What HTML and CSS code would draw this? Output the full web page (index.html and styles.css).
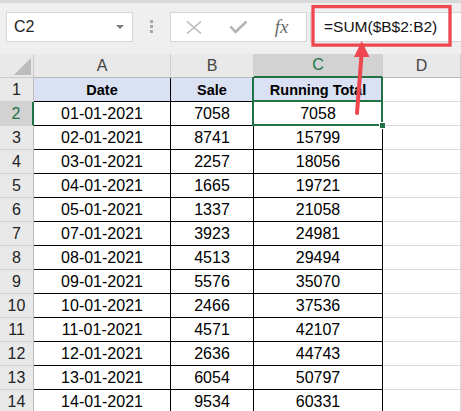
FILE: index.html
```html
<!DOCTYPE html>
<html lang="en">
<head>
  <meta charset="UTF-8" />
  <meta name="viewport" content="width=device-width, initial-scale=1.0"/>
  <title>Running Total</title>
  <link rel="stylesheet" href="styles.css">
</head>
<body>
  <div class="sheet">
    <div class="toolbar">
      <div class="namebox"><span>C2</span><span class="caret"></span></div>
      <div class="grip"><i></i><i></i><i></i></div>
      <div class="fbtns">
        <svg width="16" height="13" viewBox="0 0 16 13"><path d="M1 0.5 L15 12.5 M15 0.5 L1 12.5" stroke="#bdbdbd" stroke-width="1.6" fill="none"/></svg>
        <svg width="19" height="14" viewBox="0 0 19 14"><path d="M1.5 6.5 L6.5 12 L17.5 1.5" stroke="#b3b3b3" stroke-width="2.6" fill="none"/></svg>
        <span class="fx">fx</span>
      </div>
      <div class="formula">=SUM($B$2:B2)</div>
    </div>

    <div class="grid">
      <div class="corner"><span></span></div>
      <div class="colhead">A</div>
      <div class="colhead">B</div>
      <div class="colhead on">C</div>
      <div class="colhead">D</div>

      <div class="rowhead">1</div>
      <div class="c h">Date</div>
      <div class="c h">Sale</div>
      <div class="c h c1">Running Total</div>
      <div></div>

      <div class="rowhead on">2</div>
      <div class="c">01-01-2021</div>
      <div class="c">7058</div>
      <div class="c sel">7058</div>
      <div></div>

      <div class="rowhead">3</div>
      <div class="c">02-01-2021</div>
      <div class="c">8741</div>
      <div class="c">15799</div>
      <div></div>

      <div class="rowhead">4</div>
      <div class="c">03-01-2021</div>
      <div class="c">2257</div>
      <div class="c">18056</div>
      <div></div>

      <div class="rowhead">5</div>
      <div class="c">04-01-2021</div>
      <div class="c">1665</div>
      <div class="c">19721</div>
      <div></div>

      <div class="rowhead">6</div>
      <div class="c">05-01-2021</div>
      <div class="c">1337</div>
      <div class="c">21058</div>
      <div></div>

      <div class="rowhead">7</div>
      <div class="c">07-01-2021</div>
      <div class="c">3923</div>
      <div class="c">24981</div>
      <div></div>

      <div class="rowhead">8</div>
      <div class="c">08-01-2021</div>
      <div class="c">4513</div>
      <div class="c">29494</div>
      <div></div>

      <div class="rowhead">9</div>
      <div class="c">09-01-2021</div>
      <div class="c">5576</div>
      <div class="c">35070</div>
      <div></div>

      <div class="rowhead">10</div>
      <div class="c">10-01-2021</div>
      <div class="c">2466</div>
      <div class="c">37536</div>
      <div></div>

      <div class="rowhead">11</div>
      <div class="c">11-01-2021</div>
      <div class="c">4571</div>
      <div class="c">42107</div>
      <div></div>

      <div class="rowhead">12</div>
      <div class="c">12-01-2021</div>
      <div class="c">2636</div>
      <div class="c">44743</div>
      <div></div>

      <div class="rowhead">13</div>
      <div class="c">13-01-2021</div>
      <div class="c">6054</div>
      <div class="c">50797</div>
      <div></div>

      <div class="rowhead">14</div>
      <div class="c">14-01-2021</div>
      <div class="c">9534</div>
      <div class="c">60331</div>
      <div></div>
    </div>

    <!-- red call-out drawn over the formula bar -->
    <svg class="callout" width="461" height="411" viewBox="0 0 461 411">
      <rect x="313" y="6.6" width="137" height="38.5" fill="none" stroke="#ef4750" stroke-width="3.3"/>
      <line x1="357" y1="113" x2="361.6" y2="54" stroke="#ef4750" stroke-width="4" stroke-linecap="round"/>
      <polygon points="361.7,41 354,57 369.5,57" fill="#ef4750"/>
    </svg>
  </div>
</body>
</html>
```

FILE: styles.css
```css
body {
  margin: 0;
  font-family: "Liberation Sans", Arial, sans-serif;
  background-color: #fff;
  overflow: hidden;
}

.sheet {
  position: relative;
  width: 461px;
  height: 411px;
  overflow: hidden;
}

/* formula bar */
.toolbar {
  height: 54px;
  box-sizing: border-box;
  border-top: 3px solid #d8d8d8;
  background-color: #efefef;
  display: flex;
  align-items: flex-start;
  padding: 9px 0 0 6px;
}

.namebox {
  width: 127px;
  height: 30px;
  box-sizing: border-box;
  background-color: #fff;
  border: 1px solid #d6d6d6;
  display: flex;
  align-items: center;
  justify-content: space-between;
  padding: 0 8px 0 7px;
  font-size: 16px;
  color: #222;
}

.caret {
  border-left: 4px solid transparent;
  border-right: 4px solid transparent;
  border-top: 4px solid #7a7a7a;
}

.grip {
  width: 37px;
  display: flex;
  flex-direction: column;
  align-items: center;
  gap: 2px;
  padding-top: 8px;
}

.grip i {
  width: 3px;
  height: 3px;
  background-color: #a8a8a8;
}

.fbtns {
  width: 137px;
  height: 30px;
  box-sizing: border-box;
  background-color: #fff;
  border: 1px solid #d6d6d6;
  display: grid;
  grid-template-columns: repeat(3, 1fr);
  align-items: center;
  justify-items: center;
}

.fx {
  font-family: "Liberation Serif", serif;
  font-style: italic;
  font-size: 19px;
  color: #6b6b6b;
  margin-right: 4px;
}

.formula {
  flex: 1;
  height: 30px;
  margin-left: 3px;
  box-sizing: border-box;
  background-color: #fff;
  border: 1px solid #d6d6d6;
  border-right: none;
  padding-left: 13px;
  display: flex;
  align-items: center;
  font-size: 15.5px;
  color: #111;
}

/* worksheet */
.grid {
  display: grid;
  grid-template-columns: 34px 137px 83px 129px 1fr;
  grid-auto-rows: 24px;
  font-size: 16px;
}

.grid > div {
  box-sizing: border-box;
  display: flex;
  align-items: center;
  justify-content: center;
  border-right: 1px solid #dadada;
  border-bottom: 1px solid #dadada;
}

.grid > .corner {
  background-color: #e9e9e9;
  border-color: #c9c9c9;
  justify-content: flex-end;
  align-items: flex-end;
  padding: 0 2px 2px 0;
}

.corner span {
  width: 0;
  height: 0;
  border-left: 17px solid transparent;
  border-bottom: 17px solid #bcbcbc;
}

.grid > .colhead {
  background-color: #e9e9e9;
  color: #444;
  border-right-color: #cfcfcf;
  border-bottom-color: #b8b8b8;
}

.grid > .rowhead {
  background-color: #e9e9e9;
  color: #222;
  border-right-color: #bdbdbd;
  border-bottom-color: #d2d2d2;
}

.grid > .on {
  background-color: #d2d2d2;
  color: #217346;
}

.grid > .colhead.on {
  border-bottom: 2px solid #217346;
}

.grid > .rowhead.on {
  border-right: 2px solid #217346;
}

.grid > .c {
  color: #000;
  border-right-color: #000;
  border-bottom-color: #000;
}

.grid > .h {
  background-color: #d9e1f2;
  font-weight: bold;
  font-size: 14.5px;
}

.c1,
.sel {
  position: relative;
}

.c1::after {
  content: "";
  position: absolute;
  top: -1px;
  bottom: -1px;
  left: -2px;
  right: -1px;
  border-left: 2px solid #217346;
  border-right: 2px solid #217346;
}

.sel::after {
  content: "";
  position: absolute;
  top: -2px;
  bottom: -1px;
  left: -2px;
  right: -1px;
  border: 2px solid #217346;
}

.sel::before {
  content: "";
  position: absolute;
  right: -4px;
  bottom: -4px;
  width: 5px;
  height: 5px;
  background-color: #217346;
  border: 1px solid #fff;
  z-index: 1;
}

.callout {
  position: absolute;
  top: 0;
  left: 0;
  pointer-events: none;
}
```
